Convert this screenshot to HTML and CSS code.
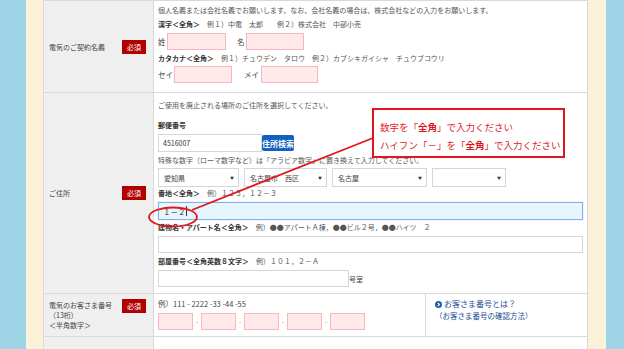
FILE: index.html
```html
<!DOCTYPE html>
<html lang="ja">
<head>
    <meta charset="UTF-8">
    <meta name="viewport" content="width=device-width, initial-scale=1.0">
    <title>お申し込みフォーム</title>
    <link rel="stylesheet" href="styles.css">
</head>
<body>
    <div class="page">
        <div class="side-blue"></div>
        <div class="side-cream"></div>

        <main class="main">
            <div class="stripe"></div>
            <div class="form-table">

                <!-- 契約名義 -->
                <div class="row row-name">
                    <div class="label-cell">
                        <span class="label-text">電気のご契約名義</span>
                        <span class="badge">必須</span>
                    </div>
                    <div class="field-cell">
                        <p class="note first">個人名義または会社名義でお願いします。なお、会社名義の場合は、株式会社などの入力をお願いします。</p>
                        <p class="hint gap4"><b>漢字＜全角＞</b>　例１）中電　太郎　　例２）株式会社　中部小売</p>
                        <div class="name-inputs gap4">
                            <span class="name-label">姓</span><input type="text" class="input pink w59">
                            <span class="name-label second">名</span><input type="text" class="input pink w58">
                        </div>
                        <p class="hint gap3"><b>カタカナ＜全角＞</b>　例１）チュウデン　タロウ　例２）カブシキガイシャ　チュウブコウリ</p>
                        <div class="name-inputs gap3">
                            <span class="name-label kana">セイ</span><input type="text" class="input pink w58">
                            <span class="name-label second kana">メイ</span><input type="text" class="input pink w57">
                        </div>
                    </div>
                </div>

                <!-- 住所 -->
                <div class="row row-address">
                    <div class="label-cell">
                        <span class="label-text">ご住所</span>
                        <span class="badge">必須</span>
                    </div>
                    <div class="field-cell">
                        <p class="note first-address">ご使用を廃止される場所のご住所を選択してください。</p>
                        <p class="hint gap10"><b>郵便番号</b></p>
                        <div class="zip-row gap4">
                            <input type="text" class="input zip" value="4516007">
                            <button class="search-button">住所検索</button>
                        </div>
                        <p class="note gap3">特殊な数字（ローマ数字など）は「アラビア数字」に置き換えて入力してください。</p>
                        <div class="select-row gap3">
                            <div class="select s1"><span>愛知県</span><span class="arrow">▼</span></div>
                            <div class="select s2"><span>名古屋市　西区</span><span class="arrow">▼</span></div>
                            <div class="select s3"><span>名古屋</span><span class="arrow">▼</span></div>
                            <div class="select s4"><span></span><span class="arrow">▼</span></div>
                        </div>
                        <p class="hint gap1"><b>番地＜全角＞</b>　例）１２３，１２－３</p>
                        <div class="focus-wrap gap4">
                            <input type="text" class="input wide focused" value="１－２">
                            <span class="caret"></span>
                        </div>
                        <p class="hint gap2"><b>建物名・アパート名＜全角＞</b>　例）●●アパートＡ棟，●●ビル２号，●●ハイツ　２</p>
                        <input type="text" class="input wide short gap4">
                        <p class="hint gap3"><b>部屋番号＜全角英数８文字＞</b>　例）１０１，２－Ａ</p>
                        <div class="room-row gap4">
                            <input type="text" class="input room short">
                            <span class="unit">号室</span>
                        </div>
                    </div>
                </div>

                <!-- お客さま番号 -->
                <div class="row row-number">
                    <div class="label-cell">
                        <span class="label-text">電気のお客さま番号<br>（13桁）<br>＜半角数字＞</span>
                        <span class="badge top">必須</span>
                    </div>
                    <div class="field-cell split">
                        <div class="number-part">
                            <p class="example">例）111 - 2222 -33 -44 -55</p>
                            <div class="number-inputs">
                                <input type="text" class="input pink num">
                                <span class="dash">-</span>
                                <input type="text" class="input pink num">
                                <span class="dash">-</span>
                                <input type="text" class="input pink num">
                                <span class="dash">-</span>
                                <input type="text" class="input pink num">
                                <span class="dash">-</span>
                                <input type="text" class="input pink num">
                            </div>
                        </div>
                        <div class="help-part">
                            <a class="help-link">
                                <svg class="help-icon" width="7" height="7" viewBox="0 0 10 10">
                                    <circle cx="5" cy="5" r="5" fill="#1f5ca8"/>
                                    <path d="M4 2.6 L6.4 5 L4 7.4" fill="none" stroke="#fff" stroke-width="1.6"/>
                                </svg>お客さま番号とは？
                            </a>
                            <a class="help-link sub">（お客さま番号の確認方法）</a>
                        </div>
                    </div>
                </div>

                <div class="row row-next">
                    <div class="label-cell"></div>
                    <div class="field-cell"></div>
                </div>
            </div>
        </main>

        <div class="side-cream right"></div>
        <div class="side-blue right"></div>

        <!-- 注意書き（赤枠） -->
        <svg class="marks" width="624" height="349">
            <line x1="192" y1="210" x2="373" y2="138" stroke="#e3161d" stroke-width="1.8"/>
            <ellipse cx="173" cy="217" rx="24" ry="9.5" fill="none" stroke="#e3161d" stroke-width="1.8"/>
        </svg>
        <div class="callout">
            <p>数字を「<b>全角</b>」で入力ください</p>
            <p>ハイフン「－」を「<b>全角</b>」で入力ください</p>
        </div>
    </div>
</body>
</html>
```

FILE: styles.css
```css
* {
    box-sizing: border-box;
}
body {
    margin: 0;
    font-family: "Noto Sans CJK JP", "Noto Sans", sans-serif;
    color: #555;
}
.page {
    position: relative;
    display: flex;
    width: 624px;
    height: 349px;
    overflow: hidden;
}
.side-blue {
    width: 26px;
    background-color: #9dd4e6;
}
.side-blue.right {
    width: 18px;
}
.side-cream {
    width: 17px;
    background-color: #fbf0d8;
}
.side-cream.right {
    width: 18px;
}
.main {
    flex: 1;
    display: flex;
    flex-direction: column;
    background-color: #fbf0d8;
}
.stripe {
    height: 5px;
    background: repeating-linear-gradient(90deg, #fdf7ea 0 18px, #faefd6 18px 34px);
}
.form-table {
    flex: 1;
    background-color: #fff;
    border: 1px solid #d9d9d9;
    border-bottom: none;
}
.row {
    display: flex;
    border-bottom: 1px solid #d9d9d9;
}
.row-name {
    height: 92px;
}
.row-address {
    height: 201px;
}
.row-number {
    height: 43px;
}
.row-next {
    height: 30px;
}
.label-cell {
    width: 110px;
    flex-shrink: 0;
    display: flex;
    align-items: center;
    padding-left: 5px;
    background-color: #efefef;
    border-right: 1px solid #d9d9d9;
}
.label-text {
    width: 73px;
    font-size: 7px;
    line-height: 10px;
    color: #444;
}
.badge {
    width: 24px;
    height: 14px;
    display: flex;
    align-items: center;
    justify-content: center;
    background-color: #b10000;
    color: #fff;
    font-size: 7px;
}
.badge.top {
    align-self: flex-start;
    margin-top: 5px;
}
.field-cell {
    flex: 1;
    padding: 0 3px 0 4px;
}
.note,
.hint {
    margin: 0;
    font-size: 7px;
    line-height: 10px;
    white-space: nowrap;
}
.hint b {
    color: #333;
}
.first {
    margin-top: 4px;
}
.first-address {
    margin-top: 7px;
}
.gap1 { margin-top: 1px; }
.gap2 { margin-top: 2px; }
.gap3 { margin-top: 3px; }
.gap4 { margin-top: 4px; }
.gap10 { margin-top: 10px; }

.input {
    display: block;
    height: 18px;
    margin-left: 0;
    margin-right: 0;
    padding: 0 4px;
    border: 1px solid #d6d6d6;
    background-color: #fff;
    font-family: inherit;
    font-size: 7px;
    color: #333;
    outline: none;
}
.input.pink {
    height: 17px;
    background-color: #ffe9eb;
    border-color: #f6b6bc;
}
.input.short {
    height: 17px;
}
.w57 { width: 57px; }
.w58 { width: 58px; }
.w59 { width: 59px; }

.name-inputs {
    display: flex;
    align-items: center;
}
.name-label {
    width: 9px;
    font-size: 7.5px;
    color: #444;
}
.name-label.kana {
    width: 16px;
}
.name-label.second {
    margin-left: 11px;
}
.name-label.second.kana {
    margin-left: 12px;
    width: 17px;
}

.zip-row {
    display: flex;
    align-items: center;
}
.input.zip {
    width: 104px;
}
.search-button {
    width: 32px;
    height: 16px;
    padding: 0;
    border: none;
    border-radius: 2px;
    background-color: #1560bd;
    color: #fff;
    font-family: inherit;
    font-size: 8px;
    font-weight: bold;
}
.select-row {
    display: flex;
    gap: 5px;
}
.select {
    height: 19px;
    display: flex;
    align-items: center;
    justify-content: space-between;
    padding: 0 4px 0 5px;
    border: 1px solid #d6d6d6;
    font-size: 7px;
    color: #444;
}
.s1 { width: 81px; }
.s2 { width: 83px; }
.s3 { width: 95px; }
.s4 { width: 74px; }
.arrow {
    font-size: 4px;
    color: #333;
}
.input.wide {
    width: 425px;
}
.focus-wrap {
    position: relative;
}
.input.focused {
    background-color: #e7f6fd;
    border-color: #80b1ee;
    box-shadow: 0 0 1px #9cc3f2;
    font-size: 7.5px;
}
.caret {
    position: absolute;
    left: 28px;
    top: 4px;
    width: 1px;
    height: 10px;
    background-color: #333;
}
.room-row {
    display: flex;
    align-items: center;
}
.input.room {
    width: 191px;
}
.unit {
    font-size: 7px;
    color: #444;
}

.field-cell.split {
    display: flex;
    padding: 0;
}
.number-part {
    width: 272px;
    padding-left: 4px;
    border-right: 1px solid #d9d9d9;
}
.example {
    margin: 5px 0 0;
    font-size: 7.5px;
    line-height: 10px;
    color: #444;
}
.number-inputs {
    display: flex;
    align-items: center;
    margin-top: 4px;
}
.input.num {
    width: 35px;
}
.dash {
    width: 8px;
    text-align: center;
    font-size: 6px;
    color: #666;
}
.help-part {
    flex: 1;
    padding: 4px 0 0 9px;
}
.help-link {
    display: flex;
    align-items: center;
    font-size: 8px;
    line-height: 12px;
    color: #1d4f91;
}
.help-link.sub {
    font-size: 7.5px;
}
.help-icon {
    margin-right: 2px;
}

.marks {
    position: absolute;
    top: 0;
    left: 0;
    pointer-events: none;
}
.callout {
    position: absolute;
    left: 372px;
    top: 108px;
    width: 193px;
    height: 50px;
    padding: 8px 0 0 6px;
    border: 2px solid #e3161d;
    background-color: #fff;
}
.callout p {
    margin: 0;
    font-size: 9.5px;
    line-height: 18px;
    color: #e4202a;
    white-space: nowrap;
}
.callout b {
    color: #d9141c;
}
```
